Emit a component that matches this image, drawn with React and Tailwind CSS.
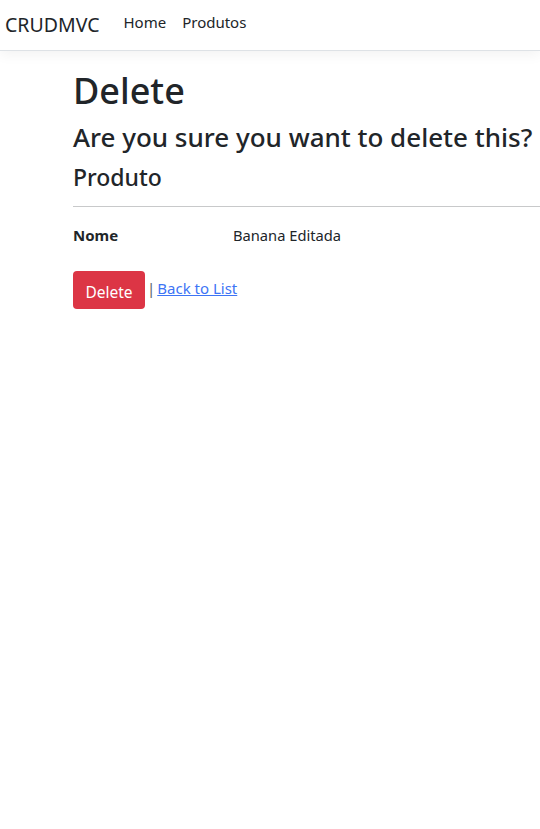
export default function App() {
  return (
    <div className="min-h-[829px] bg-white text-[#212529] font-['Noto_Sans',sans-serif]">
      <header className="h-[51px] border-b border-[#dee2e6] shadow-[0_4px_12px_rgba(0,0,0,0.05)] bg-white flex items-center">
        <a className="ml-[5px] mr-[24px] text-[19.5px] leading-[30px] text-[#212529] -mt-[1px]">CRUDMVC</a>
        <nav className="flex gap-[16px] text-[15px] text-[#212529] -mt-[6px]">
          <a>Home</a>
          <a>Produtos</a>
        </nav>
      </header>
      <main className="pl-[73px] pt-[17px]">
        <h1 className="text-[36px] leading-[46px] font-medium mb-[6px]">Delete</h1>
        <h3 className="text-[26px] leading-[34px] font-medium whitespace-nowrap">Are you sure you want to delete this?</h3>
        <div>
          <h4 className="mt-[8px] text-[23px] leading-[30px] font-medium">Produto</h4>
          <hr className="mt-[14px] mb-[18px] border-t border-[#c8c9ca]" />
          <dl className="flex leading-[21px]">
            <dt className="w-[160px] font-bold text-[15px]">Nome</dt>
            <dd className="text-[14.7px]">Banana Editada</dd>
          </dl>
          <form className="mt-[25px] flex items-center text-[15px]">
            <button type="button" className="bg-[#dc3545] text-white text-[15.5px] leading-[22px] w-[72px] h-[38px] pt-[3px] rounded-[4px]">Delete</button>
            <span className="ml-[2px] text-[#5c636a] mb-[3px]">|</span>
            <a className="ml-[2px] text-[#3d74f5] underline mb-[3px]">Back to List</a>
          </form>
        </div>
      </main>
    </div>
  );
}
